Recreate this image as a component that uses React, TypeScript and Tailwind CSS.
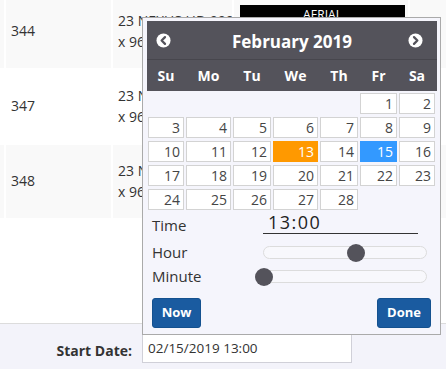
import React from 'react';

const weekDays = ['Su', 'Mo', 'Tu', 'We', 'Th', 'Fr', 'Sa'];

// February 2019 starts on a Friday
const days: (number | null)[] = [
  null, null, null, null, null, 1, 2,
  ...Array.from({ length: 28 }, (_, i) => i + 1).slice(2),
];

const Arrow: React.FC<{ dir: 'prev' | 'next' }> = ({ dir }) => (
  <svg width="15" height="15" viewBox="0 0 16 16">
    <circle cx="8" cy="8" r="7.5" fill="#fff" />
    <path
      d={dir === 'prev' ? 'M9.6 4.4 6 8l3.6 3.6' : 'M6.4 4.4 10 8l-3.6 3.6'}
      fill="none"
      stroke="#54535b"
      strokeWidth="2.4"
      strokeLinecap="round"
      strokeLinejoin="round"
    />
  </svg>
);

const DayCell: React.FC<{ day: number | null }> = ({ day }) => {
  if (day === null) return <div />;
  const base = 'h-[21px] border text-right pr-[3px] text-[14px] leading-[19px]';
  if (day === 13) return <div className={`${base} border-[#f90] bg-[#f90] text-white`}>{day}</div>;
  if (day === 15) return <div className={`${base} border-[#39f] bg-[#39f] text-white`}>{day}</div>;
  return <div className={`${base} border-[#d3d3d3] bg-white text-[#454545]`}>{day}</div>;
};

const Slider: React.FC<{ left: string }> = ({ left }) => (
  <div className="relative w-[164px] h-[13px] rounded-full border border-[#dcdcdc] bg-[#f8f8fc]">
    <div className={`absolute top-[-3px] ${left} -ml-[9px] w-[18px] h-[18px] rounded-full bg-[#54535b]`} />
  </div>
);

export default function App() {
  return (
    <div className="relative w-[446px] h-[369px] overflow-hidden bg-white text-[#333] font-['Open_Sans',sans-serif]">
      {/* table behind the picker */}
      <div className="flex flex-col">
        <div className="flex h-[68px] gap-[2px] bg-white">
          <div className="w-[4px] bg-[#f9f9f9]" />
          <div className="w-[105px] bg-[#f9f9f9] pl-[5px] pt-[21px] text-[14px] leading-[20px]">344</div>
          <div className="w-[119px] bg-[#f9f9f9] pl-[5px] pt-[10px] text-[14px] leading-[21px] whitespace-nowrap overflow-hidden">
            23 NEXUS HD 990<br />x 960 mm
          </div>
          <div className="w-[174px] bg-[#f9f9f9] pl-[6px] pt-[5px]">
            <div className="w-[165px] h-[30px] bg-black text-white text-center text-[12px] leading-[20px] underline">AERIAL</div>
          </div>
          <div className="flex-1 bg-[#f9f9f9]" />
        </div>
        <div className="flex h-[77px] gap-[2px] bg-white">
          <div className="w-[4px]" />
          <div className="w-[105px] pl-[5px] pt-[28px] text-[14px] leading-[20px]">347</div>
          <div className="w-[119px] pl-[5px] pt-[17px] text-[14px] leading-[21px] whitespace-nowrap overflow-hidden">
            23 NEXUS HD 990<br />x 960 mm
          </div>
        </div>
        <div className="flex h-[73px] gap-[2px] bg-white">
          <div className="w-[4px] bg-[#f9f9f9]" />
          <div className="w-[105px] bg-[#f9f9f9] pl-[5px] pt-[26px] text-[14px] leading-[20px]">348</div>
          <div className="w-[119px] bg-[#f9f9f9] pl-[5px] pt-[15px] text-[14px] leading-[21px] whitespace-nowrap overflow-hidden">
            23 NEXUS HD 990<br />x 960 mm
          </div>
          <div className="w-[174px] bg-[#f9f9f9]" />
          <div className="flex-1 bg-[#f9f9f9]" />
        </div>
        <div className="h-[105px]" />
        <div className="flex h-[46px] border-t border-[#dcdcdc] bg-[#f3f3fa] pt-[10px]">
          <div className="w-[132px] h-[29px] flex items-center justify-end pt-[3px] text-[14px] font-bold">Start Date:</div>
          <div className="ml-[10px] w-[210px] h-[29px] border border-[#d0d0d8] bg-white pl-[5px] flex items-center text-[13.5px]">
            02/15/2019 13:00
          </div>
        </div>
      </div>

      {/* datetime picker popup */}
      <div className="absolute left-[142px] top-[17px] w-[299px] h-[318px] border border-[#aaa] bg-[#f5f5fc] pt-[3px] pl-[4px] pr-[3px]">
        <div className="bg-[#54535b] text-white">
          <div className="grid grid-cols-[1fr_auto_1fr] items-center h-[39px] border-b border-[#47464d]">
            <div className="pl-[9px] flex"><Arrow dir="prev" /></div>
            <div className="text-[17px] font-bold pt-[3px]">February 2019</div>
            <div className="pr-[14px] flex justify-end"><Arrow dir="next" /></div>
          </div>
          <div className="grid grid-cols-[36px_45px_38px_45px_38px_37px_36px] gap-x-[2px] pl-[1px] h-[31px] items-center text-center text-[14px] font-bold">
            {weekDays.map((d) => (
              <div key={d}>{d}</div>
            ))}
          </div>
        </div>

        <div className="mt-[2px] pl-[1px] grid grid-cols-[36px_45px_38px_45px_38px_37px_36px] gap-x-[2px] gap-y-[3px]">
          {days.map((d, i) => (
            <DayCell key={i} day={d} />
          ))}
        </div>

        <div className="mt-[2px] pl-[5px] flex flex-col">
          <div className="flex h-[26px]">
            <div className="w-[111px] pt-[3px] text-[15px] leading-[20px]">Time</div>
            <div className="w-[155px] h-[22px] border-b border-[#333] pl-[5px] text-[18px] leading-[20px] tracking-[1.5px] text-[#222]">13:00</div>
          </div>
          <div className="flex h-[22px] mt-[3px] items-center">
            <div className="w-[111px] text-[15px] leading-[20px]">Hour</div>
            <Slider left="left-[92px]" />
          </div>
          <div className="flex h-[22px] mt-[2px] items-center">
            <div className="w-[111px] text-[15px] leading-[20px]">Minute</div>
            <Slider left="left-[0px]" />
          </div>
          <div className="flex justify-between pr-[6px] mt-[11px]">
            <button className="w-[49px] h-[30px] rounded-[3px] border border-[#14518f] bg-[#1a5ba0] text-white text-[13px] font-bold">Now</button>
            <button className="w-[54px] h-[30px] rounded-[3px] border border-[#14518f] bg-[#1a5ba0] text-white text-[13px] font-bold">Done</button>
          </div>
        </div>
      </div>
    </div>
  );
}
